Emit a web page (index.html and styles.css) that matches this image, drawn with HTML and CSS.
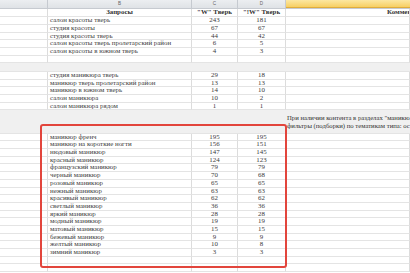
FILE: index.html
```html
<!DOCTYPE html>
<html lang="ru">
<head>
  <meta charset="UTF-8">
  <title>Запросы</title>
  <link rel="stylesheet" href="styles.css">
</head>
<body>
<div class="sheet">
  <div class="row col-heads">
    <div class="ch"></div>
    <div class="ch">B</div>
    <div class="ch">C</div>
    <div class="ch">D</div>
    <div class="ch active"></div>
  </div>

  <div class="row head">
    <div class="cell"></div>
    <div class="cell mid">Запросы</div>
    <div class="cell mid">"W" Тверь</div>
    <div class="cell mid">"!W" Тверь</div>
    <div class="cell note-head">Коммен</div>
  </div>
  <div class="row"><div class="cell"></div><div class="cell">салон красоты тверь</div><div class="cell num">243</div><div class="cell num">181</div><div class="cell"></div></div>
  <div class="row"><div class="cell"></div><div class="cell">студия красоты</div><div class="cell num">67</div><div class="cell num">67</div><div class="cell"></div></div>
  <div class="row"><div class="cell"></div><div class="cell">студия красоты тверь</div><div class="cell num">44</div><div class="cell num">42</div><div class="cell"></div></div>
  <div class="row"><div class="cell"></div><div class="cell">салон красоты тверь пролетарский район</div><div class="cell num">6</div><div class="cell num">5</div><div class="cell"></div></div>
  <div class="row"><div class="cell"></div><div class="cell">салон красоты в южном тверь</div><div class="cell num">4</div><div class="cell num">3</div><div class="cell"></div></div>
  <div class="row"><div class="cell"></div><div class="cell"></div><div class="cell"></div><div class="cell"></div><div class="cell"></div></div>

  <div class="band short"></div>

  <div class="row"><div class="cell"></div><div class="cell">студия маникюра тверь</div><div class="cell num">29</div><div class="cell num">18</div><div class="cell"></div></div>
  <div class="row"><div class="cell"></div><div class="cell">маникюр тверь пролетарский район</div><div class="cell num">13</div><div class="cell num">13</div><div class="cell"></div></div>
  <div class="row"><div class="cell"></div><div class="cell">маникюр в южном тверь</div><div class="cell num">14</div><div class="cell num">10</div><div class="cell"></div></div>
  <div class="row"><div class="cell"></div><div class="cell">салон маникюра</div><div class="cell num">10</div><div class="cell num">2</div><div class="cell"></div></div>
  <div class="row"><div class="cell"></div><div class="cell">салон маникюра рядом</div><div class="cell num">1</div><div class="cell num">1</div><div class="cell"></div></div>

  <div class="band tall">
    <div class="note">
      <p>При наличии контента в разделах "маникю</p>
      <p>фильтры (подборки) по тематикам типа: ос</p>
    </div>
  </div>

  <div class="row"><div class="cell"></div><div class="cell">маникюр френч</div><div class="cell num">195</div><div class="cell num">195</div><div class="cell"></div></div>
  <div class="row"><div class="cell"></div><div class="cell">маникюр на короткие ногти</div><div class="cell num">156</div><div class="cell num">151</div><div class="cell"></div></div>
  <div class="row"><div class="cell"></div><div class="cell">нюдовый маникюр</div><div class="cell num">147</div><div class="cell num">145</div><div class="cell"></div></div>
  <div class="row"><div class="cell"></div><div class="cell">красный маникюр</div><div class="cell num">124</div><div class="cell num">123</div><div class="cell"></div></div>
  <div class="row"><div class="cell"></div><div class="cell">французский маникюр</div><div class="cell num">79</div><div class="cell num">79</div><div class="cell"></div></div>
  <div class="row"><div class="cell"></div><div class="cell">черный маникюр</div><div class="cell num">70</div><div class="cell num">68</div><div class="cell"></div></div>
  <div class="row"><div class="cell"></div><div class="cell">розовый маникюр</div><div class="cell num">65</div><div class="cell num">65</div><div class="cell"></div></div>
  <div class="row"><div class="cell"></div><div class="cell">нежный маникюр</div><div class="cell num">63</div><div class="cell num">63</div><div class="cell"></div></div>
  <div class="row"><div class="cell"></div><div class="cell">красивый маникюр</div><div class="cell num">62</div><div class="cell num">62</div><div class="cell"></div></div>
  <div class="row"><div class="cell"></div><div class="cell">светлый маникюр</div><div class="cell num">36</div><div class="cell num">36</div><div class="cell"></div></div>
  <div class="row"><div class="cell"></div><div class="cell">яркий маникюр</div><div class="cell num">28</div><div class="cell num">28</div><div class="cell"></div></div>
  <div class="row"><div class="cell"></div><div class="cell">модный маникюр</div><div class="cell num">19</div><div class="cell num">19</div><div class="cell"></div></div>
  <div class="row"><div class="cell"></div><div class="cell">матовый маникюр</div><div class="cell num">15</div><div class="cell num">15</div><div class="cell"></div></div>
  <div class="row"><div class="cell"></div><div class="cell">бежевый маникюр</div><div class="cell num">9</div><div class="cell num">9</div><div class="cell"></div></div>
  <div class="row"><div class="cell"></div><div class="cell">желтый маникюр</div><div class="cell num">10</div><div class="cell num">8</div><div class="cell"></div></div>
  <div class="row"><div class="cell"></div><div class="cell">зимний маникюр</div><div class="cell num">3</div><div class="cell num">3</div><div class="cell"></div></div>
  <div class="row"><div class="cell"></div><div class="cell"></div><div class="cell"></div><div class="cell"></div><div class="cell"></div></div>
  <div class="row"><div class="cell"></div><div class="cell"></div><div class="cell"></div><div class="cell"></div><div class="cell"></div></div>

  <!-- red highlight frame over the manicure block -->
  <div class="highlight"></div>
</div>
</body>
</html>
```

FILE: styles.css
```css
* {
  margin: 0;
  padding: 0;
  box-sizing: border-box;
}

body {
  background: #ffffff;
  overflow: hidden;
  font-family: "Liberation Serif", "DejaVu Serif", serif;
  color: #3c3c3c;
}

.sheet {
  position: relative;
  width: 410px;
}

/* every row shares the column widths */
.row {
  display: grid;
  grid-template-columns: 48px 144px 46px 48px 1fr;
  height: 7.7px;
}

.cell {
  border-right: 1px solid #dcdcdc;
  border-bottom: 1px solid #e4e4e4;
  font-size: 6.9px;
  line-height: 6.7px;
  padding-left: 2px;
  white-space: nowrap;
  overflow: hidden;
}

.cell.num,
.cell.mid {
  text-align: center;
  padding-left: 0;
}

.row.head {
  height: 7.8px;
}

.row.head .cell {
  font-weight: bold;
  color: #333333;
}

.cell.note-head {
  padding-left: 101px;
}

/* column letters */
.col-heads {
  height: 9.4px;
  background: linear-gradient(to bottom, #eceef1, #dfe2e6);
  border-bottom: 1px solid #c6cad0;
}

.ch {
  border-right: 1px solid #c6cad0;
  font-family: "Liberation Sans", sans-serif;
  font-size: 4.6px;
  line-height: 8.4px;
  color: #666666;
  text-align: center;
}

.ch.active {
  background: linear-gradient(to bottom, #fce7a2, #f7cf62);
  border-right: none;
  border-bottom: 1px solid #e0ad3c;
}

/* grey filled spacer rows */
.band {
  background: #f0f0f0;
  border-bottom: 1px solid #e4e4e4;
}

.band.short {
  height: 8.6px;
}

.band.tall {
  height: 23.4px;
  padding: 4px 0 0 287px;
}

.note p {
  font-size: 6.7px;
  line-height: 7.2px;
  white-space: nowrap;
  color: #333333;
}

.highlight {
  position: absolute;
  left: 40px;
  top: 123.5px;
  width: 247px;
  height: 144px;
  border: 2px solid #e2453c;
  border-radius: 3px;
  pointer-events: none;
}
```
